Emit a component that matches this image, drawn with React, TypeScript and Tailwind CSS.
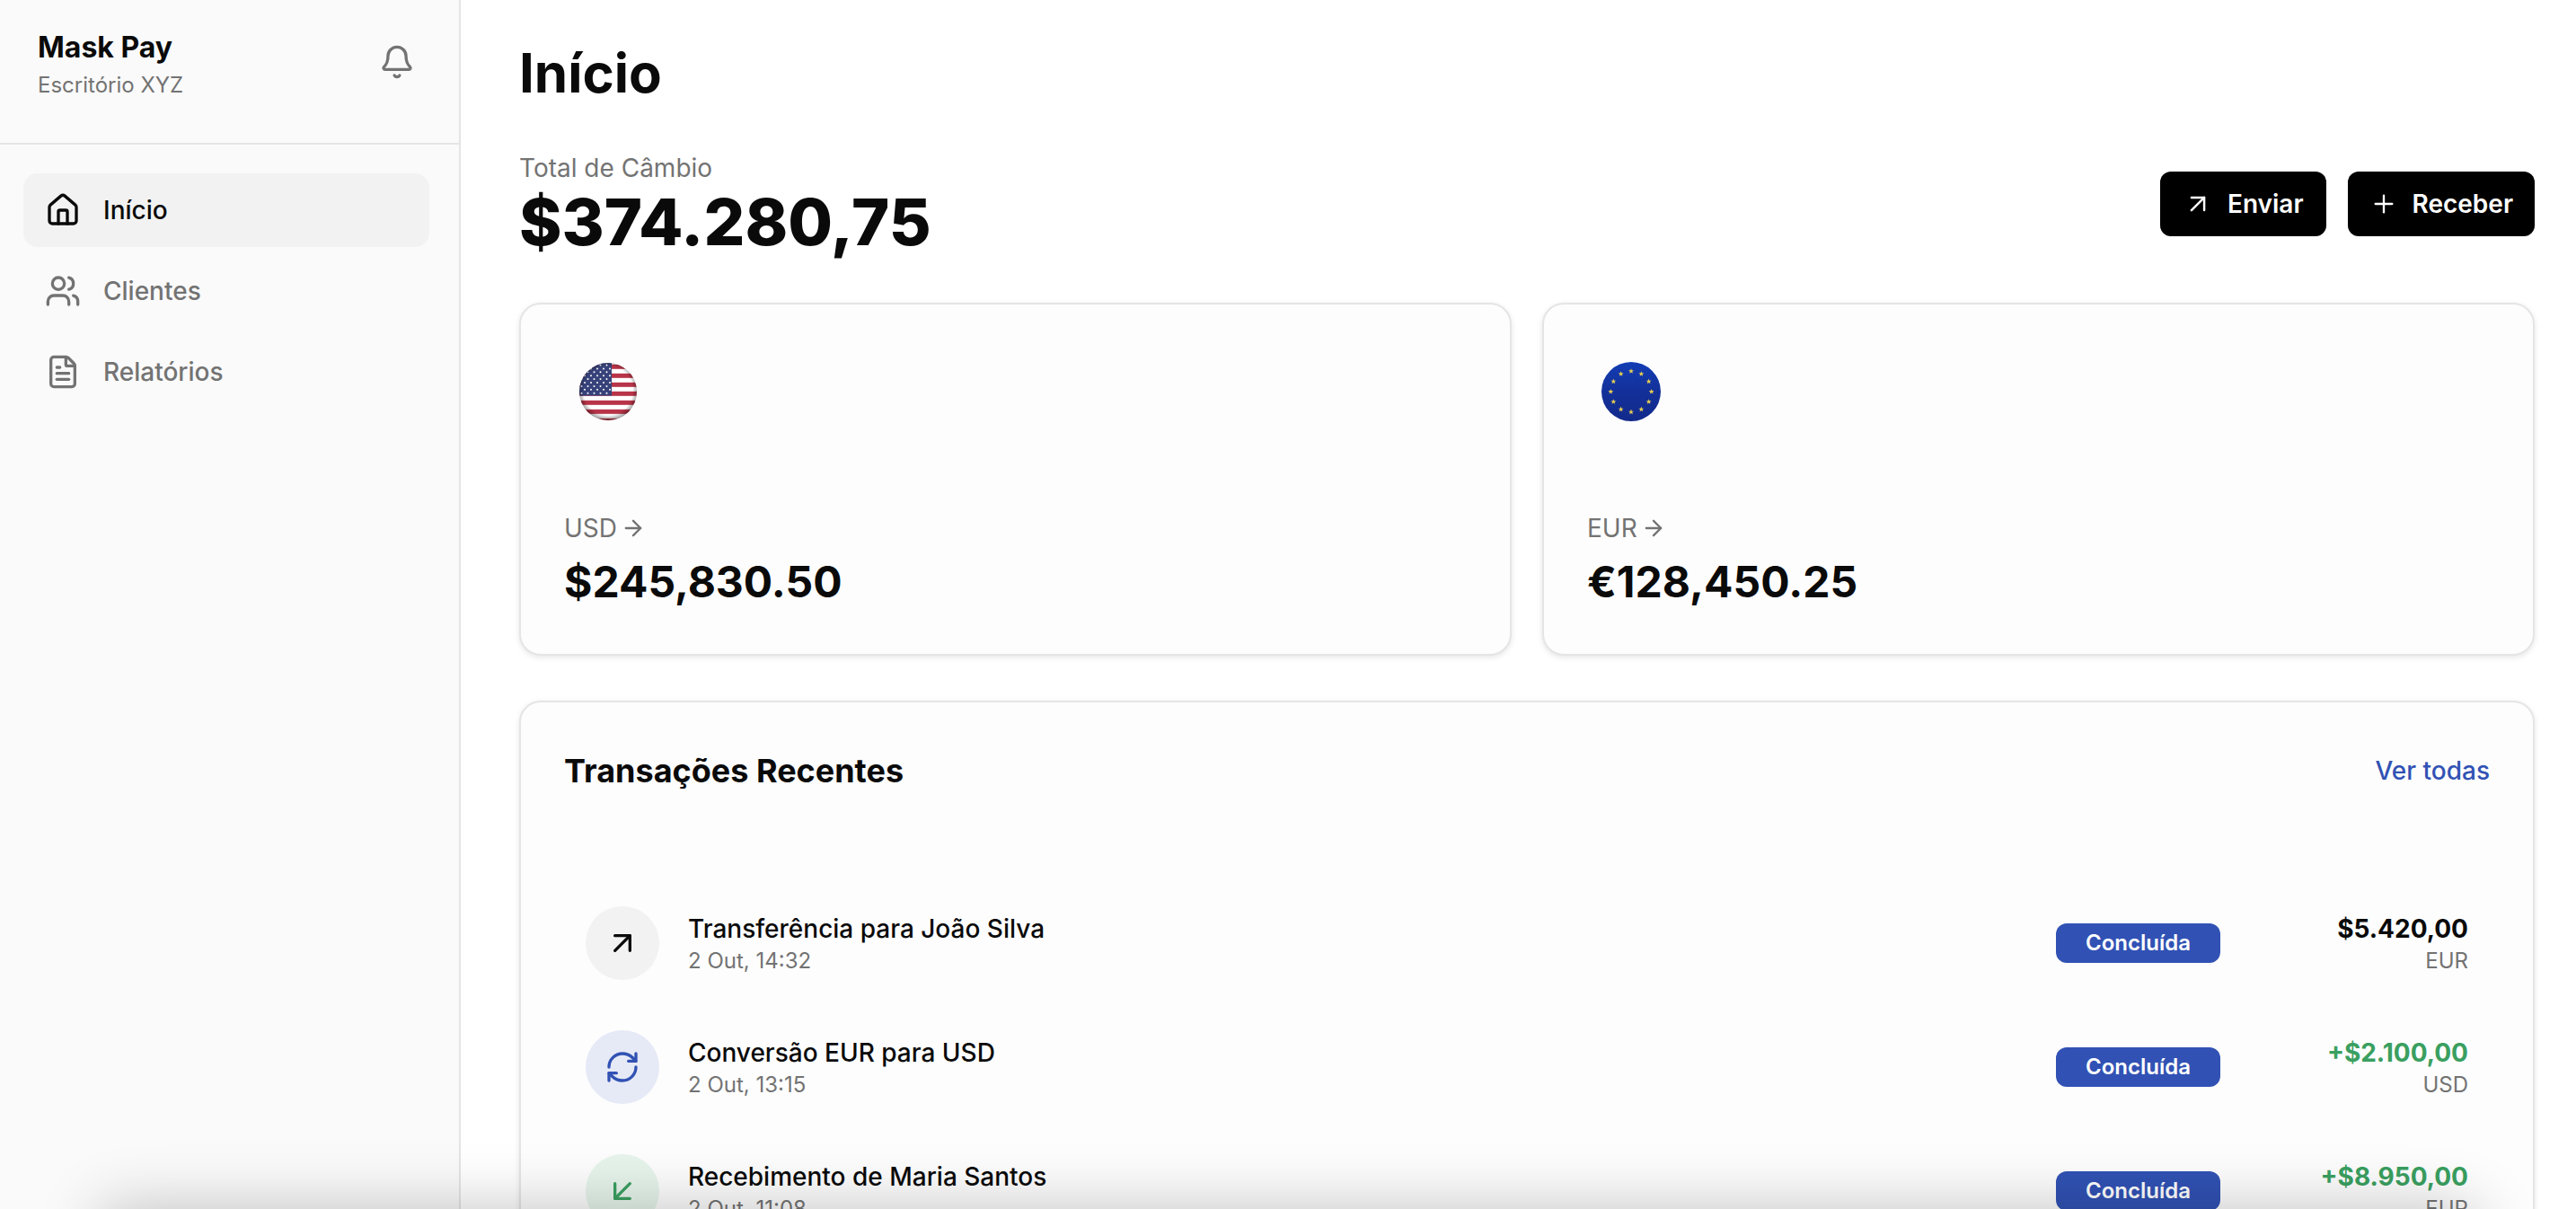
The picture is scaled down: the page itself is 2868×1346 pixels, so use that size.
import React from "react";
import {
  ArrowDownLeft,
  ArrowRight,
  ArrowUpRight,
  Bell,
  FileText,
  House,
  Plus,
  RefreshCw,
  Users,
} from "lucide-react";

const navItems = [
  { label: "Início", icon: House, active: true },
  { label: "Clientes", icon: Users, active: false },
  { label: "Relatórios", icon: FileText, active: false },
];

const transactions = [
  {
    title: "Transferência para João Silva",
    date: "2 Out, 14:32",
    amount: "$5.420,00",
    currency: "EUR",
    icon: ArrowUpRight,
    iconClass: "bg-[#f2f2f2] text-[#0a0a0a]",
    amountClass: "text-[#0a0a0a]",
  },
  {
    title: "Conversão EUR para USD",
    date: "2 Out, 13:15",
    amount: "+$2.100,00",
    currency: "USD",
    icon: RefreshCw,
    iconClass: "bg-[#e6e9f6] text-[#3152b4]",
    amountClass: "text-[#3a9f60]",
  },
  {
    title: "Recebimento de Maria Santos",
    date: "2 Out, 11:08",
    amount: "+$8.950,00",
    currency: "EUR",
    icon: ArrowDownLeft,
    iconClass: "bg-[#e6f4eb] text-[#3a9f60]",
    amountClass: "text-[#3a9f60]",
  },
];

function UsFlag() {
  const stripes = [0, 1, 2, 3, 4, 5, 6];
  const rows = [0, 1, 2, 3, 4, 5, 6, 7, 8];
  const cols = [0, 1, 2, 3, 4];
  return (
    <svg viewBox="0 0 64 64" className="size-16" aria-hidden="true">
      <defs>
        <clipPath id="us-clip">
          <circle cx="32" cy="32" r="32" />
        </clipPath>
        <radialGradient id="us-shade" cx="0.5" cy="0.48" r="0.52">
          <stop offset="0.82" stopColor="#000" stopOpacity="0" />
          <stop offset="1" stopColor="#000" stopOpacity="0.4" />
        </radialGradient>
      </defs>
      <g clipPath="url(#us-clip)">
        <rect width="64" height="64" fill="#fff" />
        {stripes.map((i) => (
          <rect key={i} y={i * 10 + 2 - 0.2} width="64" height="5" fill="#b83448" />
        ))}
        <rect width="36" height="36.5" fill="#37427a" />
        {rows.map((r) =>
          cols.map((c) => (
            <circle
              key={`${r}-${c}`}
              cx={(r % 2 ? 6 : 2.5) + c * 7}
              cy={2.5 + r * 3.9}
              r="1"
              fill="#fff"
            />
          ))
        )}
        <rect width="64" height="64" fill="url(#us-shade)" />
      </g>
    </svg>
  );
}

function EuFlag() {
  const stars = [0, 30, 60, 90, 120, 150, 180, 210, 240, 270, 300, 330];
  return (
    <svg viewBox="0 0 64 64" className="size-[66px]" aria-hidden="true">
      <defs>
        <linearGradient id="eu-fill" x1="0" y1="0" x2="0" y2="1">
          <stop offset="0" stopColor="#133db4" />
          <stop offset="0.5" stopColor="#13309a" />
          <stop offset="1" stopColor="#122a8a" />
        </linearGradient>
      </defs>
      <circle cx="32" cy="32" r="32" fill="url(#eu-fill)" />
      {stars.map((deg) => {
        const x = 32 + 22 * Math.sin((deg * Math.PI) / 180);
        const y = 32 - 22 * Math.cos((deg * Math.PI) / 180);
        return (
          <path
            key={deg}
            transform={`translate(${x} ${y})`}
            d="M0-3 .75-.95 2.85-.93 1.2.4 1.76 2.43 0 1.22-1.76 2.43-1.2.4-2.85-.93-.75-.95Z"
            fill="#e8cf52"
          />
        );
      })}
    </svg>
  );
}

function Sidebar() {
  return (
    <aside className="w-[513px] shrink-0 border-r-2 border-[#e5e5e5] bg-[#fafafa]">
      <div className="flex items-start justify-between border-b-2 border-[#e5e5e5] pt-[33px] pr-[33px] pb-11 pl-[42px]">
        <div className="flex flex-col gap-0.5">
          <p className="text-[32px] leading-10 font-bold text-[#0a0a0a]">Mask Pay</p>
          <p className="text-2xl leading-10 text-[#737373]">Escritório XYZ</p>
        </div>
        <button type="button" aria-label="Notificações" className="p-4 text-[#737373]">
          <Bell size={40} />
        </button>
      </div>
      <nav className="flex flex-col gap-2 pt-8 pr-[33px] pl-[26px]">
        {navItems.map(({ label, icon: Icon, active }) => (
          <a
            key={label}
            href="#"
            className={`flex items-center gap-[25px] rounded-2xl px-6 py-[21px] text-[28px] leading-10 font-medium ${
              active ? "bg-[#f2f2f2] text-[#0a0a0a]" : "text-[#737373]"
            }`}
          >
            <Icon size={40} />
            {label}
          </a>
        ))}
      </nav>
    </aside>
  );
}

function BalanceCard({
  flag,
  currency,
  amount,
}: {
  flag: React.ReactNode;
  currency: string;
  amount: string;
}) {
  return (
    <div className="rounded-3xl border-2 border-[#e5e5e5] bg-[#fdfdfd] p-12 shadow-[0_2px_6px_rgba(0,0,0,0.1)]">
      <div className="flex size-[98px] items-center justify-center">{flag}</div>
      <p className="mt-[83px] flex items-center gap-1 text-[28px] leading-10 text-[#737373]">
        {currency} <ArrowRight size={28} />
      </p>
      <p className="mt-2 text-5xl leading-16 font-bold text-[#0a0a0a]">{amount}</p>
    </div>
  );
}

function Transactions() {
  return (
    <section className="rounded-3xl border-2 border-[#e5e5e5] bg-[#fdfdfd] p-12 shadow-[0_2px_6px_rgba(0,0,0,0.1)]">
      <div className="flex items-center justify-between">
        <h2 className="text-4xl leading-14 font-bold text-[#0a0a0a]">
          Transações Recentes
        </h2>
        <a href="#" className="text-[28px] leading-10 font-medium text-[#3152b4]">
          Ver todas
        </a>
      </div>
      <ul className="mt-[99px] flex flex-col gap-2">
        {transactions.map(({ icon: Icon, ...item }) => (
          <li key={item.title} className="flex items-center p-6">
            <div
              className={`flex size-[82px] items-center justify-center rounded-full ${item.iconClass}`}
            >
              <Icon size={40} />
            </div>
            <div className="ml-8 flex-1">
              <p className="text-[28px] leading-10 font-medium text-[#0a0a0a]">
                {item.title}
              </p>
              <p className="text-2xl leading-8 text-[#737373]">{item.date}</p>
            </div>
            <span className="rounded-xl bg-[#3152b4] px-[33px] py-1 text-2xl leading-9 font-semibold text-white">
              Concluída
            </span>
            <div className="w-[276px] text-right">
              <p className={`text-[28px] leading-10 font-bold ${item.amountClass}`}>
                {item.amount}
              </p>
              <p className="text-2xl leading-8 text-[#737373]">{item.currency}</p>
            </div>
          </li>
        ))}
      </ul>
    </section>
  );
}

function App() {
  return (
    <div className="relative flex h-screen overflow-hidden bg-white font-[Inter,sans-serif]">
      <Sidebar />
      <main className="flex min-w-0 flex-1 flex-col gap-[50px] pt-[45px] pr-[46px] pl-[65px]">
        <h1 className="text-6xl leading-18 font-bold text-[#0a0a0a]">Início</h1>
        <div className="flex items-center justify-between">
          <div>
            <p className="text-[28px] leading-10 text-[#737373]">Total de Câmbio</p>
            <p className="text-7xl leading-20 font-extrabold text-[#0a0a0a]">$374.280,75</p>
          </div>
          <div className="flex gap-6">
            <button
              type="button"
              className="flex items-center gap-4 rounded-xl bg-black px-[25px] py-4 text-[28px] leading-10 font-semibold text-white"
            >
              <ArrowUpRight size={34} strokeWidth={1.75} />
              Enviar
            </button>
            <button
              type="button"
              className="flex items-center gap-4 rounded-xl bg-black px-6 py-4 text-[28px] leading-10 font-semibold text-white"
            >
              <Plus size={32} strokeWidth={1.75} />
              Receber
            </button>
          </div>
        </div>
        <div className="grid grid-cols-2 gap-[34px]">
          <BalanceCard flag={<UsFlag />} currency="USD" amount="$245,830.50" />
          <BalanceCard flag={<EuFlag />} currency="EUR" amount="€128,450.25" />
        </div>
        <Transactions />
      </main>
      {/* soft shade along the bottom edge */}
      <div className="pointer-events-none absolute inset-x-28 top-full h-24 shadow-[0_0_70px_rgba(0,0,0,0.24)]" />
    </div>
  );
}

export default App;
